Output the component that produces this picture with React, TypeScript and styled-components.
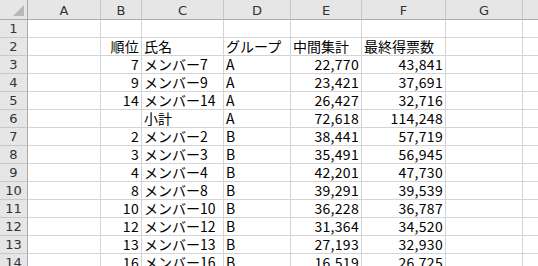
import { Fragment } from "react";
import styled, { createGlobalStyle } from "styled-components";

const GlobalStyle = createGlobalStyle`
  html, body {
    margin: 0;
    padding: 0;
    background: #ffffff;
    overflow: hidden;
  }
`;

const COLS = [28, 73, 41, 82, 67, 71, 84, 77, 60];
const LETTERS = ["A", "B", "C", "D", "E", "F", "G", ""];

type Align = "left" | "right";
type CellData = { text: string; align?: Align };

const body: string[][] = [
  ["7", "メンバー7", "A", "22,770", "43,841"],
  ["9", "メンバー9", "A", "23,421", "37,691"],
  ["14", "メンバー14", "A", "26,427", "32,716"],
  ["", "小計", "A", "72,618", "114,248"],
  ["2", "メンバー2", "B", "38,441", "57,719"],
  ["3", "メンバー3", "B", "35,491", "56,945"],
  ["4", "メンバー4", "B", "42,201", "47,730"],
  ["8", "メンバー8", "B", "39,291", "39,539"],
  ["10", "メンバー10", "B", "36,228", "36,787"],
  ["12", "メンバー12", "B", "31,364", "34,520"],
  ["13", "メンバー13", "B", "27,193", "32,930"],
  ["16", "メンバー16", "B", "16,519", "26,725"],
];

const rows: CellData[][] = [
  [],
  [
    { text: "" },
    { text: "順位", align: "right" },
    { text: "氏名" },
    { text: "グループ" },
    { text: "中間集計" },
    { text: "最終得票数" },
  ],
  ...body.map((r) => [
    { text: "" },
    { text: r[0], align: "right" as Align },
    { text: r[1] },
    { text: r[2] },
    { text: r[3], align: "right" as Align },
    { text: r[4], align: "right" as Align },
  ]),
];

const Sheet = styled.div`
  display: grid;
  grid-template-columns: ${COLS.map((c) => `${c}px`).join(" ")};
  grid-template-rows: 20px;
  grid-auto-rows: 18px;
  font-family: "Noto Sans CJK JP", "DejaVu Sans", sans-serif;
  font-size: 14px;
  color: #000000;
  width: 538px;
  height: 266px;
  overflow: hidden;
`;

const Corner = styled.div`
  position: relative;
  background: #e6e6e6;
  border-right: 1px solid #ababab;
  border-bottom: 1px solid #ababab;
  box-sizing: border-box;
  &::after {
    content: "";
    position: absolute;
    right: 3px;
    bottom: 3px;
    width: 0;
    height: 0;
    border-left: 11px solid transparent;
    border-bottom: 11px solid #b8b8b8;
  }
`;

const ColHead = styled.div`
  background: #e6e6e6;
  border-right: 1px solid #c8c8c8;
  border-bottom: 1px solid #ababab;
  box-sizing: border-box;
  display: flex;
  align-items: center;
  justify-content: center;
  font-family: "DejaVu Sans", sans-serif;
  font-size: 13px;
  color: #333333;
  padding-top: 1px;
`;

const RowHead = styled.div`
  background: #e6e6e6;
  border-right: 1px solid #ababab;
  border-bottom: 1px solid #c8c8c8;
  box-sizing: border-box;
  display: flex;
  align-items: center;
  justify-content: center;
  font-family: "DejaVu Sans", sans-serif;
  font-size: 13px;
  color: #333333;
  line-height: 17px;
`;

const Cell = styled.div<{ $align: Align }>`
  border-right: 1px solid #d4d4d4;
  border-bottom: 1px solid #d4d4d4;
  box-sizing: border-box;
  display: flex;
  align-items: center;
  justify-content: ${(p) => (p.$align === "right" ? "flex-end" : "flex-start")};
  padding: 0 2px;
  line-height: 17px;
  white-space: nowrap;
  letter-spacing: ${(p) => (p.$align === "right" ? "0.3px" : "0")};
`;

export default function App() {
  return (
    <>
      <GlobalStyle />
      <Sheet>
        <Corner />
        {LETTERS.map((l, i) => (
          <ColHead key={i}>{l}</ColHead>
        ))}
        {rows.map((r, ri) => (
          <Fragment key={ri}>
            <RowHead>{ri + 1}</RowHead>
            {Array.from({ length: 8 }).map((_, ci) => {
              const c = r[ci];
              return (
                <Cell key={ci} $align={c?.align ?? "left"}>
                  {c?.text ?? ""}
                </Cell>
              );
            })}
          </Fragment>
        ))}
      </Sheet>
    </>
  );
}
